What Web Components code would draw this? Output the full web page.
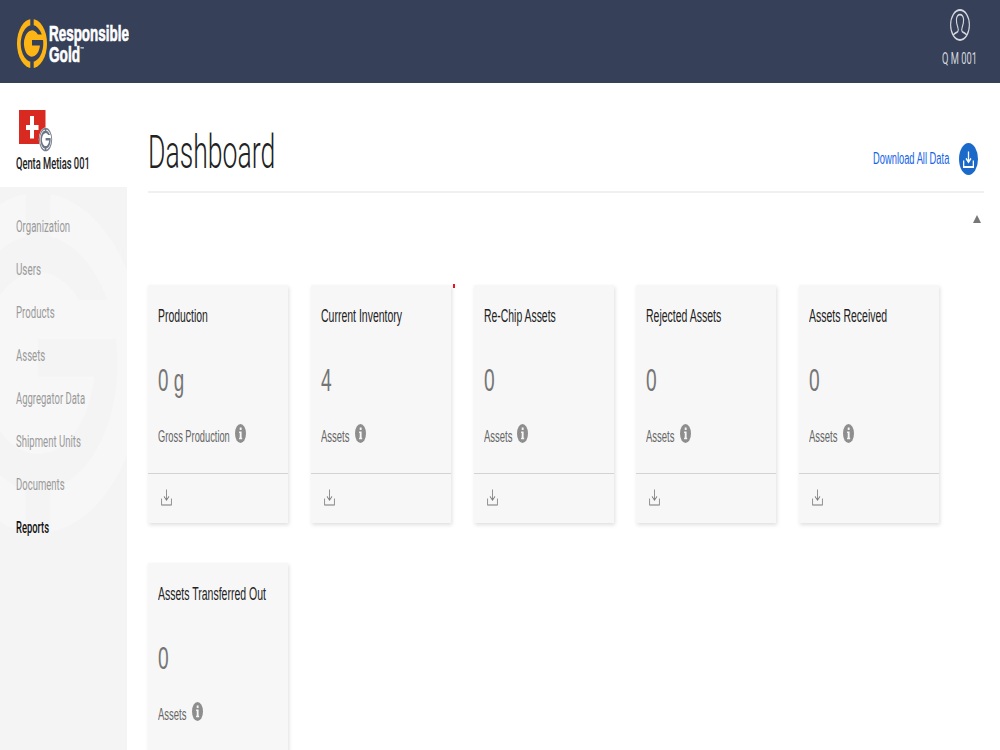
<!DOCTYPE html>
<html lang="en">
<head>
<meta charset="utf-8">
<title>Dashboard</title>
<style>
    body {
        margin: 0;
        height: 750px;
        overflow: hidden;
        background: #fff;
        font-family: Roboto, "Liberation Sans", sans-serif;
    }
</style>
</head>
<body>
<rg-app></rg-app>

<script>
/**
 * Round mark with the G cut out of it, in a 100x100 box
 */
const G_PATH = 'M82.7 31.5A37.6 37.6 0 1 0 86.9 43H50V54H76.5A26.8 26.8 0 1 1 69.4 31.5Z';
const NOTCHES = 'M44.3 -1H55.7V14H44.3ZM44.3 86H55.7V101H44.3Z';

/**
 * Text squeezed horizontally to a given width
 * @attr {number} w - width in pixels
 */
class FitText extends HTMLElement {
    constructor() {
        super();
        this.attachShadow({ mode: 'open' });
    }

    connectedCallback() {
        const width = Number(this.getAttribute('w'));
        this.shadowRoot.innerHTML = `
        <style>
            :host { display: block; width: ${width}px; white-space: nowrap; }
            span { display: inline-block; vertical-align: top; transform-origin: 0 0; }
        </style>
        <span><slot></slot></span>`;
        const span = this.shadowRoot.querySelector('span');
        span.style.transform = `scaleX(${width / span.offsetWidth})`;
    }
}
customElements.define('fit-text', FitText);

/**
 * Download icon, drawn in the current colour
 */
class DownloadIcon extends HTMLElement {
    constructor() {
        super();
        this.attachShadow({ mode: 'open' }).innerHTML = `
        <style>
            :host { display: block; width: 11px; height: 17px; }
            svg { display: block; width: 100%; height: 100%; }
        </style>
        <svg viewBox="0 0 17 17" preserveAspectRatio="none" fill="none" stroke="currentColor" stroke-width="var(--stroke, 1.2)">
            <path d="M1 9.5V16H16V9.5M8.5 .5V11M4.6 7.4L8.5 11.2L12.4 7.4"/>
        </svg>`;
    }
}
customElements.define('download-icon', DownloadIcon);

/**
 * Top bar with logo and current user
 */
class TopBar extends HTMLElement {
    constructor() {
        super();
        this.attachShadow({ mode: 'open' }).innerHTML = `
        <style>
            :host {
                display: flex;
                justify-content: space-between;
                box-sizing: border-box;
                height: 83px;
                padding: 0 23px 0 17px;
                background: #364059;
                color: #fff;
            }
            .logo { display: flex; padding-top: 19px; }
            .mark { width: 30px; height: 49px; }
            .name {
                padding: 4px 0 0 2px;
                font: bold 22px/21px "Liberation Sans", Arial, sans-serif;
                -webkit-text-stroke: .7px #fff;
            }
            .line { display: flex; }
            .tm { font-size: 6px; line-height: 8px; padding-top: 1px; -webkit-text-stroke: 0; }
            .user {
                display: flex;
                flex-direction: column;
                align-items: center;
                padding-top: 9px;
                color: #d4d7de;
                font-size: 16.5px;
                line-height: 20px;
            }
            .avatar { width: 20px; height: 32px; margin-bottom: 8px; }
        </style>
        <div class="logo">
            <svg class="mark" viewBox="0 0 100 100" preserveAspectRatio="none">
                <circle cx="50" cy="50" r="50" fill="#fdb515"/>
                <path d="${G_PATH}" fill="#364059"/>
                <path d="${NOTCHES}" fill="#364059"/>
            </svg>
            <div class="name">
                <fit-text w="80">Responsible</fit-text>
                <div class="line"><fit-text w="31">Gold</fit-text><fit-text class="tm" w="4">™</fit-text></div>
            </div>
        </div>
        <div class="user">
            <svg class="avatar" viewBox="0 0 32 32" preserveAspectRatio="none" fill="none" stroke="#d4d7de" stroke-width="1.8">
                <circle cx="16" cy="16" r="15"/>
                <path d="M5 26.3C7 24.3 10 24 12.5 22.4C13.8 21.5 13.4 20 12.5 18.4C10.8 15.5 10 13 10.3 10.4C10.7 7.3 13 5.6 16 5.6S21.3 7.3 21.7 10.4C22 13 21.2 15.5 19.5 18.4C18.6 20 18.2 21.5 19.5 22.4C22 24 25 24.3 27 26.3"/>
            </svg>
            <fit-text w="35">Q M 001</fit-text>
        </div>`;
    }
}
customElements.define('top-bar', TopBar);

/**
 * Sidebar: organization badge and navigation
 */
class SideNav extends HTMLElement {
    constructor() {
        super();
        this.attachShadow({ mode: 'open' });
        this.items = [
            ['Organization', 54],
            ['Users', 25],
            ['Products', 38.5],
            ['Assets', 29],
            ['Aggregator Data', 69],
            ['Shipment Units', 65],
            ['Documents', 48.5],
            ['Reports', 33],
        ];
    }

    connectedCallback() {
        this.shadowRoot.innerHTML = `
        <style>
            :host { display: flex; flex-direction: column; width: 127px; }
            .org {
                box-sizing: border-box;
                height: 104px;
                padding: 27px 0 0 16px;
                font-size: 16.5px;
                font-weight: 500;
                line-height: 20px;
                color: #222;
            }
            .flag { display: block; width: 38px; height: 43px; margin: 0 0 1px 2px; }
            nav {
                position: relative;
                flex: 1;
                overflow: hidden;
                padding: 19px 0 0 16px;
                background: #f4f4f4;
                font-size: 16.5px;
                line-height: 42.95px;
                color: #9a9a9a;
            }
            /* faint mark behind the links */
            .watermark { position: absolute; left: -68px; top: 6px; width: 212px; height: 340px; }
            nav fit-text { position: relative; }
            nav fit-text.active { color: #111; font-weight: 500; }
        </style>
        <div class="org">
            <svg class="flag" viewBox="0 0 38 43">
                <rect x="1" width="26.5" height="34" fill="#d82a20"/>
                <path d="M12 6H16V15H20.5V20H16V28.5H12V20H8V15H12Z" fill="#fff"/>
                <g transform="translate(20.8 17.5) scale(.136 .242)">
                    <circle cx="50" cy="50" r="50" fill="#fff"/>
                    <circle cx="50" cy="50" r="45" fill="none" stroke="#7d8593" stroke-width="7"/>
                    <path d="${G_PATH}" fill="#6c7585"/>
                    <path d="M50 3V16M50 84V97" stroke="#6c7585" stroke-width="9"/>
                </g>
            </svg>
            <fit-text w="73.5">Qenta Metias 001</fit-text>
        </div>
        <nav>
            <svg class="watermark" viewBox="0 0 100 100" preserveAspectRatio="none">
                <circle cx="50" cy="50" r="50" fill="#f7f7f7"/>
                <path d="${G_PATH}" fill="#f4f4f4"/>
                <path d="${NOTCHES}" fill="#f4f4f4"/>
            </svg>
            ${this.items.map(([label, w]) => `<fit-text w="${w}"${label === 'Reports' ? ' class="active"' : ''}>${label}</fit-text>`).join('')}
        </nav>`;
    }
}
customElements.define('side-nav', SideNav);

/**
 * Card with one figure
 * The title, value and unit are slotted in
 */
class StatCard extends HTMLElement {
    constructor() {
        super();
        this.attachShadow({ mode: 'open' }).innerHTML = `
        <style>
            :host {
                display: block;
                height: 238px;
                background: #f7f7f7;
                box-shadow: 1px 2px 4px rgba(0, 0, 0, .13);
                font-family: "Liberation Sans", Arial, sans-serif;
            }
            .body {
                box-sizing: border-box;
                height: 189px;
                padding: 19px 0 0 10px;
                border-bottom: 1px solid #d3d3d3;
            }
            .title { height: 24px; margin-bottom: 33px; font-size: 17.5px; line-height: 24px; color: #222; }
            .value { height: 40px; margin-bottom: 24px; font-size: 31px; line-height: 40px; color: #757575; }
            .unit { display: flex; gap: 5px; font-size: 16px; line-height: 24px; color: #666; }
            .info { width: 11px; height: 19px; margin-top: -1px; }
            download-icon { margin: 15px 0 0 13px; color: #777; }
        </style>
        <div class="body">
            <div class="title"><slot name="title"></slot></div>
            <div class="value"><slot name="value"></slot></div>
            <div class="unit">
                <slot name="unit"></slot>
                <svg class="info" viewBox="0 0 20 20" preserveAspectRatio="none">
                    <circle cx="10" cy="10" r="10" fill="#8e8e8e"/>
                    <path d="M8.6 3.8H12V6.4H8.6ZM7.4 8H12V14.5H13V16H7.4V14.5H8.6V9.5H7.4Z" fill="#f7f7f7"/>
                </svg>
            </div>
        </div>
        <download-icon></download-icon>`;
    }
}
customElements.define('stat-card', StatCard);

/**
 * Page title row with the download link
 */
class PageHead extends HTMLElement {
    constructor() {
        super();
        this.attachShadow({ mode: 'open' }).innerHTML = `
        <style>
            :host {
                display: flex;
                justify-content: space-between;
                box-sizing: border-box;
                height: 110px;
                border-bottom: 2px solid #f0f0f0;
            }
            h1 { margin: 0; padding-top: 39px; font-size: 46.5px; font-weight: 300; line-height: 60px; color: #222; }
            .link {
                display: flex;
                padding: 60px 6px 0 0;
                font: 16px/31px "Liberation Sans", Arial, sans-serif;
                color: #1463e8;
            }
            .round {
                display: flex;
                align-items: center;
                justify-content: center;
                width: 19px;
                height: 32px;
                margin-left: 10px;
                border-radius: 50%;
                background: #1b6ac9;
                color: #fff;
                --stroke: 2;
            }
        </style>
        <h1><slot></slot></h1>
        <div class="link">
            <fit-text w="76.5">Download All Data</fit-text>
            <div class="round"><download-icon></download-icon></div>
        </div>`;
    }
}
customElements.define('page-head', PageHead);

/**
 * Whole page
 */
class RgApp extends HTMLElement {
    constructor() {
        super();
        this.attachShadow({ mode: 'open' });
        // title, title width, value, value width, unit, unit width
        this.cards = [
            ['Production', 50, '0 g', 26, 'Gross Production', 72],
            ['Current Inventory', 81, '4', 10.5, 'Assets', 28.5],
            ['Re-Chip Assets', 72, '0', 10.5, 'Assets', 28.5],
            ['Rejected Assets', 75, '0', 10.5, 'Assets', 28.5],
            ['Assets Received', 78, '0', 10.5, 'Assets', 28.5],
            ['Assets Transferred Out', 108, '0', 10.5, 'Assets', 28.5],
        ];
    }

    connectedCallback() {
        this.shadowRoot.innerHTML = `
        <style>
            :host { display: flex; flex-direction: column; height: 750px; overflow: hidden; }
            .content { display: flex; flex: 1; min-height: 0; }
            main { flex: 1; min-width: 0; padding: 0 16px 0 21.4px; }
            .toggle { display: flex; justify-content: flex-end; height: 92px; padding: 22px 3.5px 0 0; box-sizing: border-box; }
            .toggle svg { width: 8px; height: 8px; }
            .cards { position: relative; display: grid; grid-template-columns: repeat(5, 140px); gap: 39.5px 22.7px; }
            .dot { position: absolute; left: 304.5px; top: -1px; width: 2px; height: 4px; background: #e8141c; }
        </style>
        <top-bar></top-bar>
        <div class="content">
            <side-nav></side-nav>
            <main>
                <page-head><fit-text w="127">Dashboard</fit-text></page-head>
                <div class="toggle"><svg viewBox="0 0 8 8"><path d="M4 0L8 8H0Z" fill="#777"/></svg></div>
                <div class="cards">
                    ${this.cards.map(([title, tw, value, vw, unit, uw]) => `
                    <stat-card>
                        <fit-text slot="title" w="${tw}">${title}</fit-text>
                        <fit-text slot="value" w="${vw}">${value}</fit-text>
                        <fit-text slot="unit" w="${uw}">${unit}</fit-text>
                    </stat-card>`).join('')}
                    <i class="dot"></i>
                </div>
            </main>
        </div>`;
    }
}
customElements.define('rg-app', RgApp);
</script>
</body>
</html>
